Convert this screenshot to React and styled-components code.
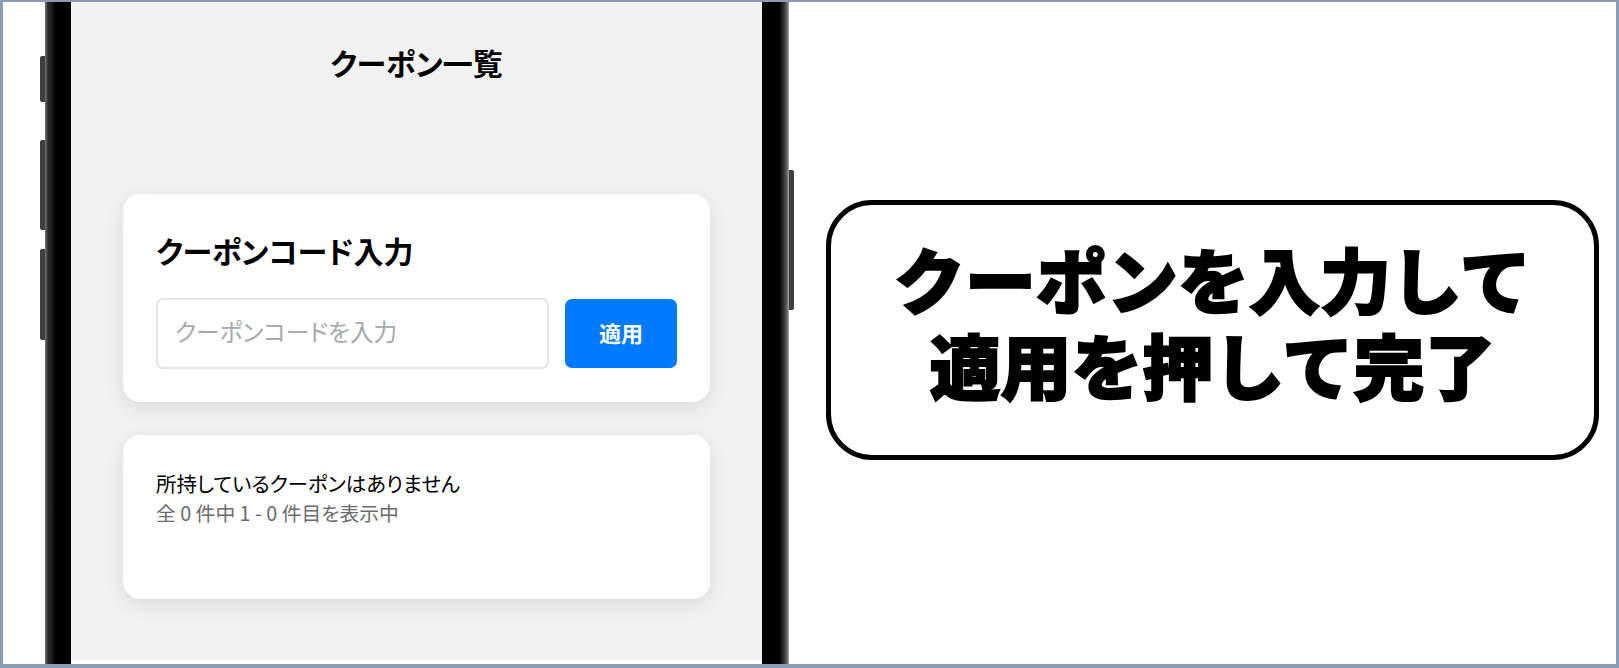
import React from "react";
import styled, { createGlobalStyle } from "styled-components";

const FONT = `"Noto Sans CJK JP", "Noto Sans", sans-serif`;

const Global = createGlobalStyle`
  html, body { margin: 0; padding: 0; background: #fff; }
  * { box-sizing: border-box; }
  body { font-family: ${FONT}; }
`;

const Frame = styled.div`
  width: 1619px;
  height: 668px;
  display: flex;
  border-style: solid;
  border-color: #8a9bb3;
  border-width: 2px 3px 4px 3px;
  background: #fff;
  overflow: hidden;
`;

const Phone = styled.div`
  position: relative;
  flex: none;
  width: 744px;
  height: 100%;
  margin-left: 42px;
  display: flex;
  background: #000;
`;

const SideButton = styled.div`
  position: absolute;
  width: 5px;
  top: ${(p) => p.$top}px;
  height: ${(p) => p.$height}px;
  ${(p) => (p.$right ? "right: -5px;" : "left: -5px;")}
  background: #3f3f3f;
  border-radius: ${(p) => (p.$right ? "0 2px 2px 0" : "2px 0 0 2px")};
`;

const Bezel = styled.div`
  flex: none;
  width: ${(p) => (p.$right ? 27 : 26)}px;
  background: ${(p) =>
    p.$right
      ? "linear-gradient(to right, #000 0, #000 17px, #333 22px, #777 26px, #c4c4c4 27px)"
      : "linear-gradient(to right, #777 0, #2c2c2c 3px, #1c1c1c 7px, #000 10px)"};
`;

const ScreenColumn = styled.div`
  flex: none;
  width: 691px;
  height: 100%;
  background: #fff;
`;

const Screen = styled.main`
  height: 658px;
  background: #f1f1f1;
  padding: 0 52px;
  display: flex;
  flex-direction: column;
`;

const PageTitle = styled.h1`
  margin: 0;
  height: 192px;
  padding-top: 40px;
  font: 700 30px/40px ${FONT};
  font-feature-settings: "palt";
  color: #000;
  text-align: center;
`;

const Card = styled.section`
  width: 587px;
  height: ${(p) => p.$height}px;
  margin-bottom: 33px;
  padding: ${(p) => p.$pad}px 33px 0 33px;
  background: #fff;
  border-radius: 17px;
  box-shadow: 0 6px 20px rgba(0, 0, 0, 0.09);
`;

const CardHeading = styled.h2`
  margin: 0 0 28px;
  font: 700 30px/40px ${FONT};
  font-feature-settings: "palt";
  color: #000;
`;

const CodeRow = styled.div`
  display: flex;
  align-items: center;
  gap: 16px;
`;

const CodeInput = styled.input`
  flex: none;
  width: 393px;
  height: 71px;
  padding: 0 17px 5px;
  border: 2px solid #e4e5e7;
  border-radius: 7px;
  background: #fff;
  font: 400 23.7px ${FONT};
  font-feature-settings: "palt";
  outline: none;
  &::placeholder { color: #a6a9ad; opacity: 1; }
`;

const ApplyButton = styled.button`
  flex: none;
  width: 112px;
  height: 69px;
  padding: 0 0 4px;
  border: 0;
  border-radius: 7px;
  background: #007bff;
  color: #fff;
  font: 700 22px ${FONT};
`;

const EmptyText = styled.p`
  margin: 0;
  font: 400 ${(p) => (p.$muted ? 19.8 : 20.4)}px/30px ${FONT};
  font-feature-settings: "palt";
  color: ${(p) => (p.$muted ? "#6b6b6b" : "#000")};
`;

const CalloutArea = styled.div`
  flex: 1;
  display: flex;
  align-items: flex-start;
  padding: 198px 16px 0 37px;
`;

const Callout = styled.div`
  width: 773px;
  height: 260px;
  padding-bottom: 20px;
  border: 5px solid #000;
  border-radius: 46px;
  display: flex;
  flex-direction: column;
  align-items: center;
  justify-content: center;
`;

const CalloutLine = styled.div`
  font: 900 71px/86px ${FONT};
  color: #000;
  white-space: nowrap;
  -webkit-text-stroke: 2px #000;
`;

export default function App() {
  return (
    <>
      <Global />
      <Frame>
        <Phone>
          <SideButton $top={54} $height={46} />
          <SideButton $top={138} $height={90} />
          <SideButton $top={247} $height={91} />
          <SideButton $right $top={168} $height={140} />
          <Bezel />
          <ScreenColumn>
            <Screen>
              <PageTitle>クーポン一覧</PageTitle>
              <Card $height={208} $pad={36}>
                <CardHeading>クーポンコード入力</CardHeading>
                <CodeRow>
                  <CodeInput placeholder="クーポンコードを入力" />
                  <ApplyButton>適用</ApplyButton>
                </CodeRow>
              </Card>
              <Card $height={164} $pad={33}>
                <EmptyText>所持しているクーポンはありません</EmptyText>
                <EmptyText $muted>全 0 件中 1 - 0 件目を表示中</EmptyText>
              </Card>
            </Screen>
          </ScreenColumn>
          <Bezel $right />
        </Phone>
        <CalloutArea>
          <Callout>
            <CalloutLine>クーポンを入力して</CalloutLine>
            <CalloutLine>適用を押して完了</CalloutLine>
          </Callout>
        </CalloutArea>
      </Frame>
    </>
  );
}
